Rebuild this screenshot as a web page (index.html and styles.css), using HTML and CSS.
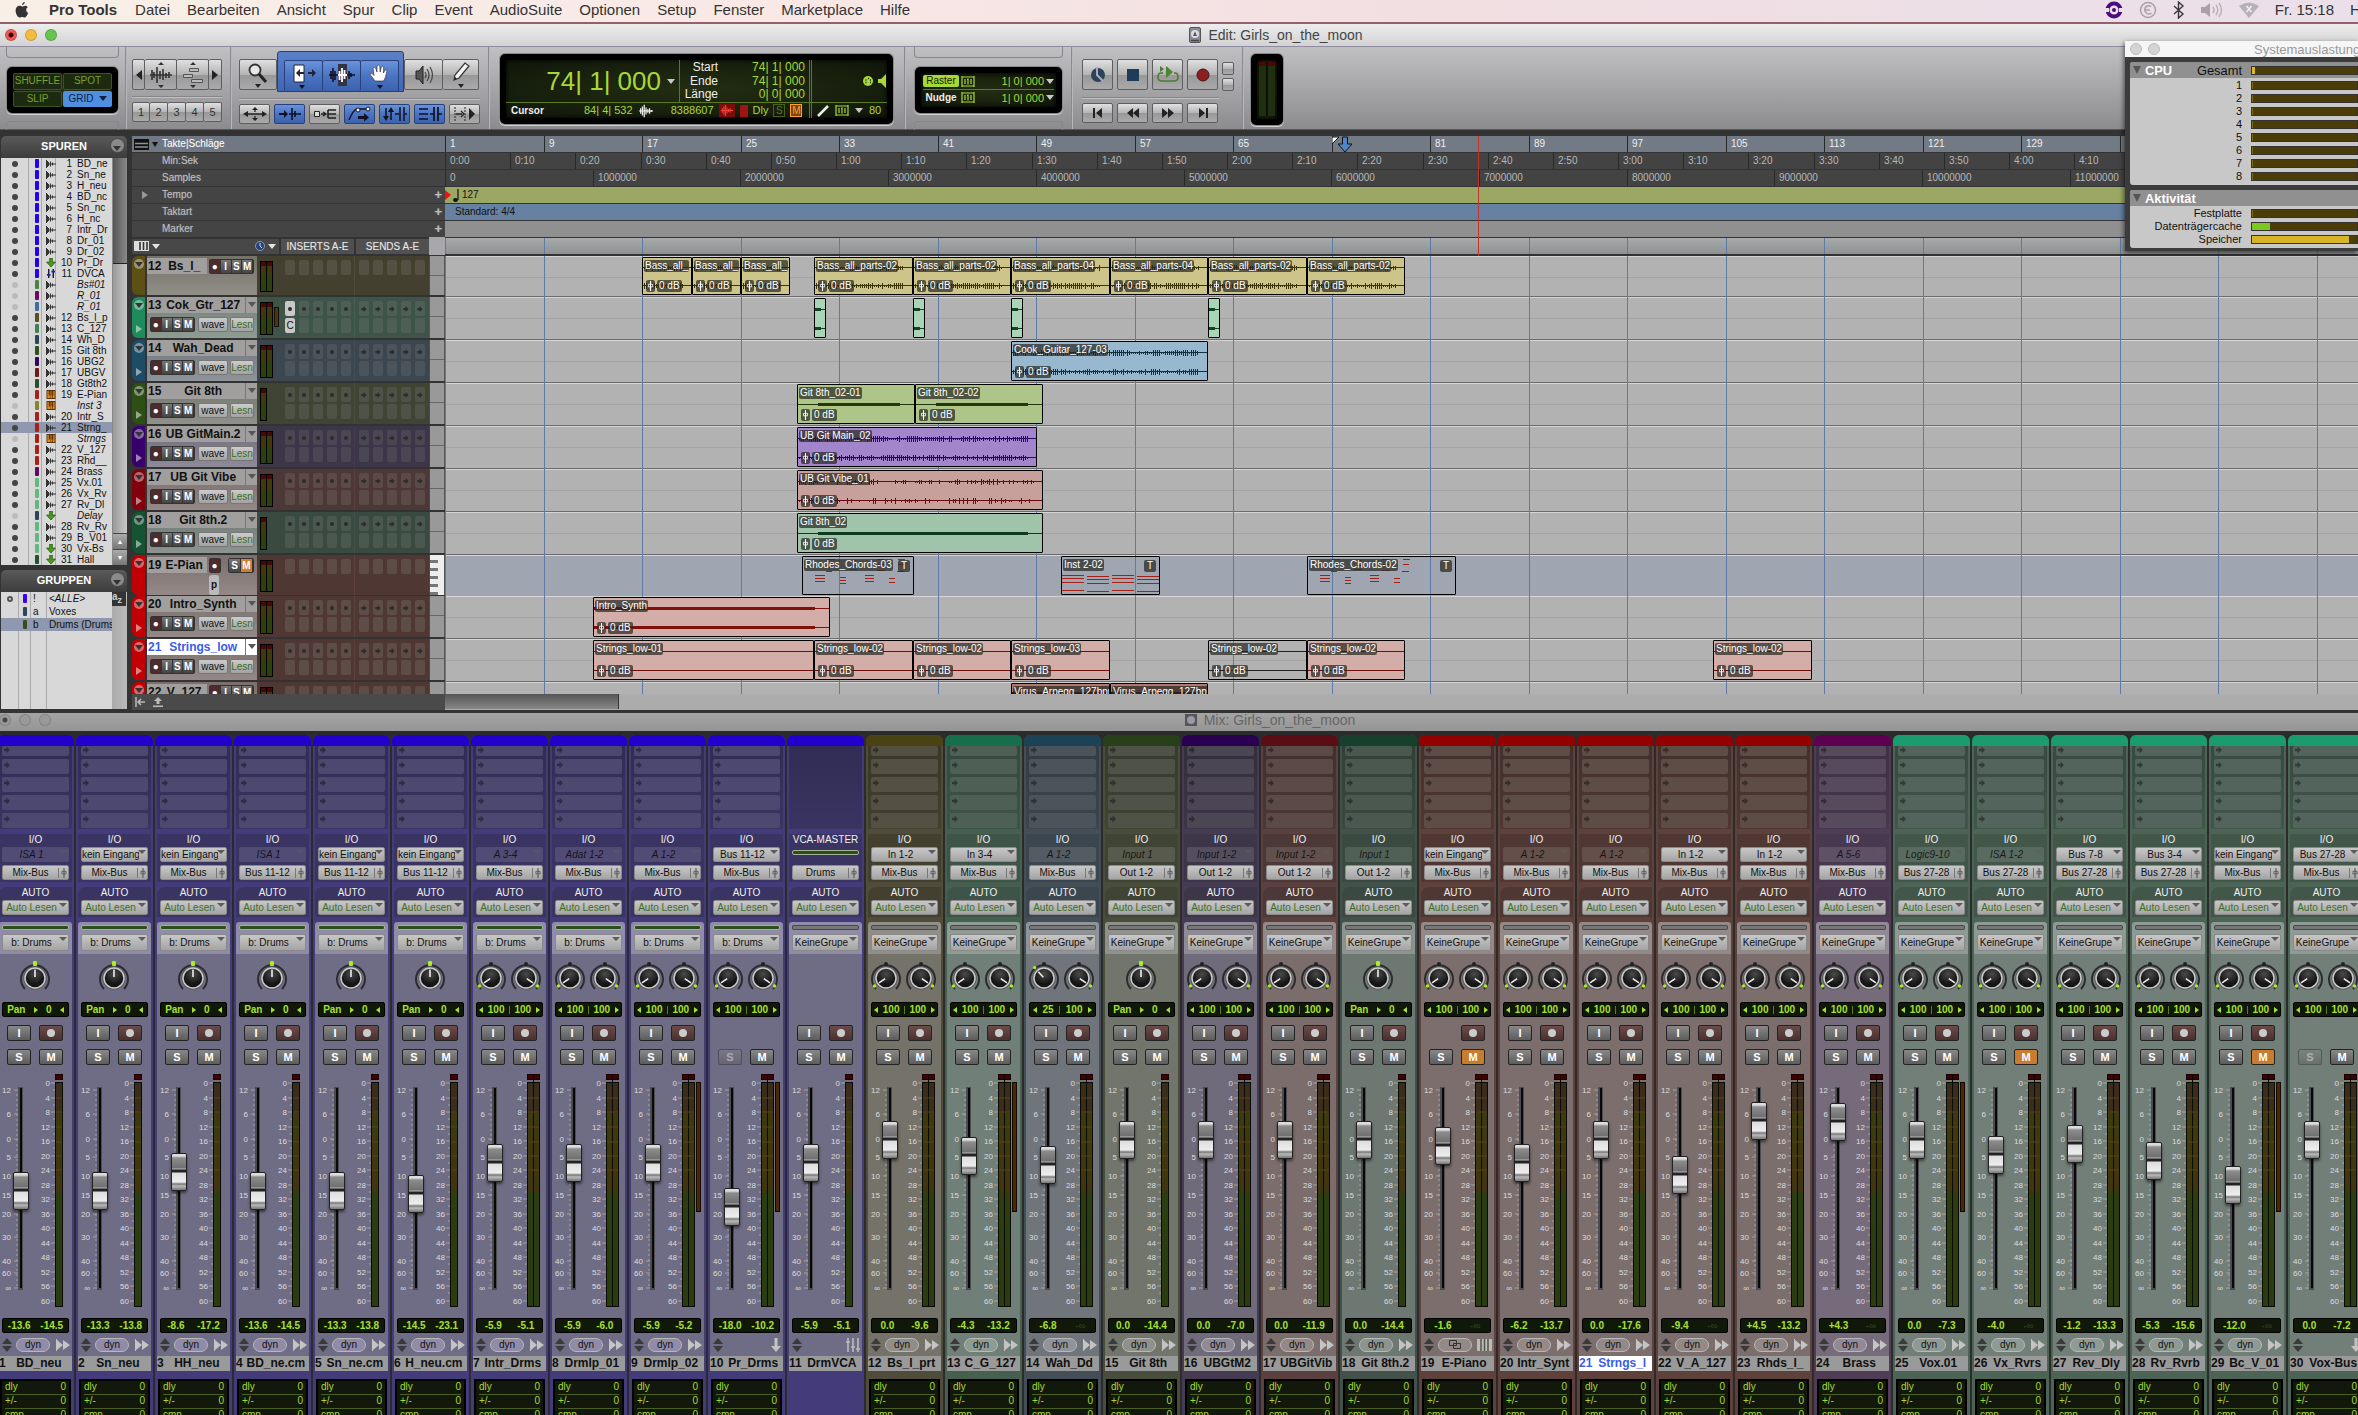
FILE: index.html
```html
<!DOCTYPE html>
<html lang="de">
<head>
<meta charset="utf-8">
<title>Pro Tools</title>
<link rel="stylesheet" href="styles.css">
</head>
<body>
<svg class="defs" aria-hidden="true">
  <defs>
    <linearGradient id="meterFill" x1="0" y1="0" x2="0" y2="1">
      <stop offset="0" stop-color="#3a2c1c"/><stop offset=".13" stop-color="#3a2f1a"/>
      <stop offset=".14" stop-color="#3d3a0e"/><stop offset=".48" stop-color="#40350f"/>
      <stop offset=".5" stop-color="#2c3d10"/><stop offset="1" stop-color="#2a3c10"/>
    </linearGradient>
    <radialGradient id="knobFill" cy=".3"><stop offset="0" stop-color="#4a4a4a"/><stop offset="1" stop-color="#151515"/></radialGradient>
    <symbol id="i-wave" viewBox="0 0 18 14"><path d="M1 7h16M3 4v6M5 2v10M7 0v14M9 3v8M11 5v4M13 4v6M15 6v2" stroke="currentColor" stroke-width="1.4" fill="none"/></symbol>
    <symbol id="i-trk" viewBox="0 0 10 8"><path d="M0 0h1v1h1v1h1v4h-1v1h-1v1h-1zM3 3.500h7v1H3zM4 1.500h1v5H4zM6 2.500h1v3H6z" fill="currentColor"/></symbol>
    <symbol id="i-aux" viewBox="0 0 10 10"><path d="M3.5 0h3v4.5H10L5 10 0 4.5h3.5z" fill="#4c9a1c" stroke="#27520c" stroke-width=".8"/></symbol>
    <symbol id="i-vca" viewBox="0 0 10 10"><path d="M2.500 0v10M7.500 0v10" stroke="#111" stroke-width="1.500"/><path d="M.5 5.500h4v2h-4zM5.500 2h4v2h-4z" fill="#1524a0"/></symbol>
    <symbol id="i-inst" viewBox="0 0 10 10"><path d="M0 0h10v10H0z" fill="#5b3408"/><path d="M1 1h1.500v5H4v3H1zM4.500 6V1h1v5H6v3H4.500zM7.500 1H9v8H6.800V6h.7z" fill="#e08a1e"/></symbol>
    <symbol id="i-fader" viewBox="0 0 8 12"><path d="M4 0v12" stroke="currentColor" stroke-width="1.300"/><path d="M1.500 4h5v3h-5z" fill="none" stroke="currentColor"/></symbol>
    <symbol id="i-grid" viewBox="0 0 14 11"><path d="M1 1h12M1 10h12M1 0v11M13 0v11M4 3v5M10 3v5M7 2.500v6M6 3.500h1" stroke="currentColor" stroke-width="1.200" fill="none"/></symbol>
    <symbol id="i-doc" viewBox="0 0 12 16"><rect x=".5" y=".5" width="11" height="15" rx="1.500" fill="#8a8a92" stroke="#555"/><circle cx="6" cy="7" r="4" fill="#dcdce4"/><path d="M6 4.500 8 9H4z" fill="#556"/><path d="M2 13.500h8" stroke="#444" stroke-width="1.500"/></symbol>
    <symbol id="i-ff" viewBox="0 0 14 12"><path d="M0 0h1v12H0zM1 1l6 5-6 5zM7 1l7 5-7 5z" fill="#c4c4c4"/></symbol>
    <symbol id="i-sort" viewBox="0 0 10 14"><path d="M5 0l5 6H0zM5 14l5-6H0z" fill="#3a3a3a"/></symbol>
    <symbol id="i-arrow" viewBox="0 0 7 8"><path d="M0 2.500h3V0l4 4-4 4V5.500H0z" fill="currentColor"/></symbol>
  </defs>
</svg>

<header class="menubar">
  <svg class="apple" viewBox="0 0 14 16"><path d="M9.800 0c.1 1.500-1.200 3-2.700 3C7 1.600 8.300.2 9.800 0zM12.800 5.200c-1 .6-1.600 1.500-1.600 2.700 0 1.300.8 2.400 2 2.900-.6 2-2 4.700-3.600 4.700-.9 0-1.300-.6-2.400-.6-1.200 0-1.600.6-2.500.6C2.800 15.500.6 11.900.6 8.500c0-3 1.900-4.700 3.800-4.700 1.200 0 2 .7 2.900.7.800 0 1.700-.8 3.100-.8 1 0 1.900.6 2.400 1.500z" fill="#333"/></svg>
  <nav class="menus">
    <a href="#" class="app">Pro Tools</a><a href="#">Datei</a><a href="#">Bearbeiten</a><a href="#">Ansicht</a><a href="#">Spur</a><a href="#">Clip</a><a href="#">Event</a><a href="#">AudioSuite</a><a href="#">Optionen</a><a href="#">Setup</a><a href="#">Fenster</a><a href="#">Marketplace</a><a href="#">Hilfe</a>
  </nav>
  <div class="status">
    <svg width="18" height="18" viewBox="0 0 18 18"><circle cx="9" cy="9" r="6.500" fill="none" stroke="#4a0d80" stroke-width="4"/><circle cx="9" cy="9" r="2" fill="#4a0d80"/><path d="M0 7h4v4H0zM14 7h4v4h-4z" fill="#eddfe8"/></svg>
    <svg width="18" height="18" viewBox="0 0 18 18"><circle cx="9" cy="9" r="7.500" fill="none" stroke="#a9a0a8" stroke-width="1.500"/><path d="M12 5.500c-4-2-7 1-6 4.500 1 3 4 4 6.500 2M6 9h5" fill="none" stroke="#a9a0a8" stroke-width="1.500"/></svg>
    <svg width="12" height="18" viewBox="0 0 12 18"><path d="M1 5l9 8-4.500 4V1L10 5l-9 8" fill="none" stroke="#3a363c" stroke-width="1.400"/></svg>
    <svg width="22" height="16" viewBox="0 0 22 16"><path d="M0 5h4l5-4v14l-5-4H0z" fill="#aaa0aa"/><path d="M12 5q2 3 0 6M15 3q3.500 5 0 10M18 1q5 7 0 14" fill="none" stroke="#b9aeb8" stroke-width="1.400"/></svg>
    <svg width="20" height="16" viewBox="0 0 20 16"><path d="M0 4Q10-3 20 4L10 16z" fill="#b9afb9"/><path d="M7.500 4l5 6M12.500 4l-5 6" stroke="#eee" stroke-width="1.600"/></svg>
    <span>Fr. 15:18</span><span class="user">H</span>
  </div>
</header>

<div class="titlebar">
  <div class="lights"><i class="red"></i><i class="yellow"></i><i class="green"></i></div>
  <h1 class="wtitle"><svg width="12" height="16"><use href="#i-doc"/></svg>Edit: Girls_on_the_moon</h1>
</div>

<section class="toolbar">
  <div class="tsec modes-sec">
    <div class="lcd modes"><button>SHUFFLE</button><button>SPOT</button><button>SLIP</button><button class="on">GRID<i class="tri"></i></button></div>
  </div>
  <div class="tsec zoom-sec">
    <div class="brow tall joined zoomrow">
      <button class="w13" aria-label="Zoom zurück"><svg width="6" height="10"><path d="M6 0v10L0 5z" fill="#222"/></svg></button>
      <button class="w32" aria-label="Audio-Zoom"><svg width="24" height="26" viewBox="0 0 24 26"><path d="M12 0l3 3H9zM12 26l3-3H9z" fill="#333"/><path d="M1 13h22M3 8v10M5 10v6M8 5v16M11 9v8M14 7v11M17 11v5M20 10v6" stroke="#333" stroke-width="1.600"/></svg></button>
      <button class="w32" aria-label="MIDI-Zoom"><svg width="22" height="26" viewBox="0 0 22 26"><path d="M11 0l3 3H8zM11 26l3-3H8z" fill="#333"/><path d="M7.500 6.500h9v3h-9zM1.500 12.500h9v3h-9zM9.500 17.500h11v3h-11z" fill="#bbb" stroke="#555"/></svg></button>
      <button class="w13" aria-label="Zoom vor"><svg width="6" height="10"><path d="M0 0v10l6-5z" fill="#222"/></svg></button>
    </div>
    <hr>
    <div class="brow short joined"><button class="w18">1</button><button class="w18">2</button><button class="w18">3</button><button class="w18">4</button><button class="w18">5</button></div>
  </div>
  <div class="tsec tools-sec">
    <div class="brow tall joined">
      <button class="w38" aria-label="Zoomer"><svg width="22" height="26" viewBox="0 0 22 26"><circle cx="8" cy="8" r="5.500" fill="#e8e8e8" stroke="#333" stroke-width="1.800"/><path d="M12 12l7 8" stroke="#222" stroke-width="3"/><path d="M8 22h6l-3 4z" fill="#222"/></svg></button>
      <span class="smart">
        <button class="blue" aria-label="Trimmer"><svg width="26" height="26" viewBox="0 0 26 26"><path d="M3 2h10v17H3z" fill="#fff" stroke="#223"/><path d="M5 10l4-4v3h4v2H9v3zM25 10l-4-4v3h-4v2h4v3z" fill="#223"/><path d="M8 22h6l-3 4z" fill="#112"/></svg></button>
        <button class="blue" aria-label="Auswahl"><svg width="26" height="26" viewBox="0 0 26 26"><path d="M9 1h9v22H9z" fill="#334"/><path d="M0 12h9M2 8v8M4 5v14M6 8v9M20 8v8M22 10v4M18 12h8" stroke="#112" stroke-width="1.600"/><path d="M9 12h9M10.500 8v9M13 5v14M15.500 7v9" stroke="#fff" stroke-width="1.800"/></svg></button>
        <button class="blue" aria-label="Greifer"><svg width="22" height="26" viewBox="0 0 22 26"><path d="M6 18C4 15 2 13 1 11c1-1.500 2.500-.5 4 1.500L4 5c1-1.500 2.500-.5 3 1l1 3V3c1-1.500 2.500-1 2.800.5L11.200 9l1-5c1-1.500 2.500-.8 2.500.8L14.500 10l1.500-3c1.200-.8 2.200 0 1.800 1.500-.8 3-1.300 7-3.300 9.500z" fill="#fff" stroke="#334" stroke-width=".7"/><path d="M8 22h6l-3 4z" fill="#112"/></svg></button>
      </span>
      <button class="w39" aria-label="Scrubber"><svg width="20" height="20" viewBox="0 0 20 20"><path d="M2 6h3l4-5v18l-4-5H2z" fill="#555" stroke="#222"/><path d="M11 7q2 3 0 6M13 4q4 6 0 12M16 2q5 8 0 16" fill="none" stroke="#444" stroke-width="1.200"/></svg></button>
      <button class="w35" aria-label="Stift"><svg width="18" height="26" viewBox="0 0 18 26"><path d="M2 18l1-5L13 1l4 3L7 16z" fill="#f4f4f4" stroke="#333" stroke-width="1.200"/><path d="M2 18l1-3 2 1.500z" fill="#222"/><path d="M6 22h6l-3 4z" fill="#222"/></svg></button>
    </div>
    <hr>
    <div class="brow short spaced">
      <button class="w31"><svg width="24" height="14" viewBox="0 0 24 14"><path d="M0 7l5-3v6zM24 7l-5-3v6zM12 0l3 3H9zM12 14l3-3H9z" fill="#222"/><path d="M4 7h16M12 3v2M12 9v2" stroke="#222" stroke-width="1.300"/></svg></button>
      <button class="w31 blue"><svg width="22" height="14" viewBox="0 0 22 14"><path d="M0 6h5V3l4 4-4 4V8H0z" fill="#112"/><path d="M10 7h12M13 1v12M16 4v6" stroke="#112" stroke-width="1.600"/></svg></button>
      <button class="w31"><svg width="22" height="12" viewBox="0 0 22 12"><path d="M.5 3.500h5v5h-5z" fill="#ddd" stroke="#222"/><path d="M7 6h4M9 4l3 2-3 2" stroke="#222" stroke-width="1.400" fill="none"/><path d="M14 2h8M14 6h8M14 10h8M14 2v8" stroke="#222" stroke-width="1.600"/></svg></button>
      <button class="w31 blue"><svg width="24" height="16" viewBox="0 0 24 16"><path d="M1 14C6 2 9 3 11 3h10" fill="none" stroke="#112" stroke-width="1.400"/><circle cx="10" cy="4" r="2" fill="#fff" stroke="#112"/><circle cx="20" cy="3" r="2" fill="#fff" stroke="#112"/><path d="M10 10h6V7l5 4.500-5 4V13h-6z" fill="#112"/></svg></button>
      <button class="w31 blue"><svg width="24" height="14" viewBox="0 0 24 14"><path d="M3 1v10M8 3v10M17 0v14M21 0v14M12 7h4M22 7h2" stroke="#112" stroke-width="1.500"/><path d="M0 9h6l-3 5zM5 5h6L8 0z" fill="#112"/></svg></button>
      <button class="w31 blue"><svg width="24" height="14" viewBox="0 0 24 14"><path d="M1 2h9M1 7h9M1 12h9M16 0v14M20 0v14M12 7h4M20 7h4" stroke="#112" stroke-width="1.700"/></svg></button>
      <button class="w31"><svg width="22" height="14" viewBox="0 0 22 14"><path d="M1 0v14M11 0v14" stroke="#222" stroke-dasharray="2 1"/><path d="M2 7h6M7 4l3 3-3 3" stroke="#222" fill="none" stroke-width="1.300"/><path d="M15 1l6 6-6 6z" fill="#222"/></svg></button>
    </div>
  </div>
  <div class="tsec counter-sec">
    <div class="lcd counter">
      <div class="main"><span class="big">74| 1| 000</span><i class="tri"></i></div>
      <dl class="range"><dt>Start</dt><dd>74| 1| 000</dd><dt>Ende</dt><dd>74| 1| 000</dd><dt>Länge</dt><dd>0| 0| 000</dd></dl>
      <div class="midi"><svg width="26" height="14" viewBox="0 0 26 14"><circle cx="6" cy="7" r="5" fill="#a8d838"/><path d="M3.500 6h1M6 4.500h1M8 6h1M3.500 8.500h1M8 8.500h1" stroke="#142000" stroke-width="1.400"/><path d="M16 5h3l5-5v14l-5-5h-3z" fill="#a8d838"/></svg></div>
      <div class="cursor"><b>Cursor</b><span class="c1">84| 4| 532</span><svg class="wv" width="16" height="14"><use href="#i-wave"/></svg><span class="c2">8388607</span><i class="redwave"><svg width="14" height="11"><use href="#i-wave"/></svg></i><i class="reddoc"></i><span>Dly</span><i class="sbox">S</i><i class="mbox">M</i></div>
      <div class="grid80"><svg width="12" height="12" viewBox="0 0 12 12"><path d="M1 11L11 1" stroke="#eee" stroke-width="2.500"/></svg><svg width="14" height="11"><use href="#i-grid"/></svg><i class="tri"></i><span>80</span></div>
    </div>
  </div>
  <div class="tsec raster-sec">
    <div class="lcd raster">
      <div><b class="badge">Raster</b><svg width="14" height="11"><use href="#i-grid"/></svg><span>1| 0| 000</span><i class="tri"></i></div>
      <div><b>Nudge</b><svg width="14" height="11"><use href="#i-grid"/></svg><span>1| 0| 000</span><i class="tri"></i></div>
    </div>
  </div>
  <div class="tsec transport-sec">
    <div class="brow tall trans">
      <button class="w31" aria-label="Online"><svg width="16" height="16" viewBox="0 0 16 16"><circle cx="8" cy="8" r="7" fill="#2c4258"/><path d="M7 0v8l6 6" stroke="#aab" stroke-width="2" fill="none"/></svg></button>
      <button class="w31" aria-label="Stopp"><svg width="12" height="12"><rect width="12" height="12" fill="#1e3c58"/></svg></button>
      <button class="w31" aria-label="Wiedergabe"><svg width="24" height="20" viewBox="0 0 24 20"><path d="M10 1l7 6-7 6z" fill="#4c8430"/><path d="M7 8H5q-3 0-3 4t4 4h12q4 0 4-4t-3-4h-1" fill="none" stroke="#4c7a38" stroke-width="1.600"/><path d="M4 1l4 3-4 3z" fill="#4c7a38"/></svg></button>
      <button class="w31" aria-label="Aufnahme"><svg width="14" height="14"><circle cx="7" cy="7" r="6" fill="#8a2020" stroke="#4a1010"/></svg></button>
      <span class="mini"><button></button><button></button></span>
    </div>
    <hr>
    <div class="brow short trans">
      <button class="w31" aria-label="Anfang"><svg width="10" height="10"><path d="M0 0h2v10H0zM9 0v10L3 5z" fill="#222"/></svg></button>
      <button class="w31" aria-label="Zurück"><svg width="12" height="10"><path d="M6 0v10L0 5zM12 0v10L6 5z" fill="#222"/></svg></button>
      <button class="w31" aria-label="Vor"><svg width="12" height="10"><path d="M0 0v10l6-5zM6 0v10l6-5z" fill="#222"/></svg></button>
      <button class="w31" aria-label="Ende"><svg width="10" height="10"><path d="M8 0h2v10H8zM1 0v10l6-5z" fill="#222"/></svg></button>
    </div>
  </div>
  <div class="tsec last-sec"><div class="lcd vu"><i></i></div></div>
</section>

<main class="edit">
  <aside class="side">
    <h2>SPUREN<button aria-label="Spurenmenü"><i class="tri"></i></button></h2>
    <div class="listwrap"><ul class="tracklist" id="tracklist"></ul><div class="vscroll"><i class="thumb"></i><button>▲</button><button>▼</button></div></div>
    <h2>GRUPPEN<button aria-label="Gruppenmenü"><i class="tri"></i></button></h2>
    <div class="listwrap groups"><ul class="grouplist">
      <li><i class="ring"></i><i class="bar g0"></i><span>!</span><em>&lt;ALLE&gt;</em></li>
      <li><i></i><i class="bar g1"></i><span>a</span>Voxes</li>
      <li class="on"><i></i><i class="bar g2"></i><span>b</span>Drums (Drums</li>
    </ul><div class="az"><b>a<sub>z</sub></b></div></div>
  </aside>
  <section class="arrange">
    <div class="rulers" id="rulers">
      <div class="rh first"><svg width="15" height="11" viewBox="0 0 15 11"><path d="M0 0h15v11H0z" fill="#111"/><path d="M1 4.500h13M1 8h13" stroke="#8b929c" stroke-width="1.500"/></svg><i class="tri"></i><span>Takte|Schläge</span></div><div class="rl bars"></div>
      <div class="rh"><span>Min:Sek</span></div><div class="rl mins"></div>
      <div class="rh"><span>Samples</span></div><div class="rl samp"></div>
      <div class="rh"><i class="rtri"></i><span>Tempo</span><b>+</b></div><div class="rl tempo"><i class="redmark"></i><svg width="6" height="13" viewBox="0 0 6 13"><ellipse cx="2.500" cy="11" rx="2.500" ry="2" fill="#111"/><path d="M5 0v11" stroke="#111" stroke-width="1.200"/></svg>127</div>
      <div class="rh"><span>Taktart</span><b>+</b></div><div class="rl meter">Standard: 4/4</div>
      <div class="rh"><span>Marker</span><b>+</b></div><div class="rl marker"></div>
      <div class="rh cols"><div class="c0"><svg width="15" height="10" viewBox="0 0 15 10"><path d="M0 0h15v10H0z" fill="#ddd"/><path d="M6 1v8M9.500 1v8M13 1v8" stroke="#333" stroke-width="1.600"/></svg><i class="tri"></i><svg class="clock" width="10" height="10" viewBox="0 0 10 10"><circle cx="5" cy="5" r="4.500" fill="#26427c" stroke="#89a"/><path d="M5 2v3l2 2" stroke="#cde" fill="none"/></svg><i class="tri"></i></div><div class="c1">INSERTS A-E</div><div class="c1">SENDS A-E</div><div class="c2"></div></div><div class="rl strip"></div>
      <i class="playhead"></i>
      <svg class="insertion" width="22" height="17" viewBox="0 0 22 17"><path d="M0 1h7L0 8z" fill="#fff" stroke="#111"/><path d="M10.500 1h5v7H20l-7 8-7-8h4.500z" fill="#4f86c6" stroke="#111"/></svg>
    </div>
    <div class="tracks" id="tracks"></div>
    <div class="foot"><div class="fl"><svg width="10" height="10" viewBox="0 0 10 10"><path d="M1 0v10M10 5H4M6 2L3 5l3 3" stroke="#bbb" stroke-width="1.500" fill="none"/></svg><svg width="10" height="10" viewBox="0 0 10 10"><path d="M5 0l4 4H6.500v3h-3V4H1zM0 8.500h10V10H0z" fill="#bbb"/></svg></div><div class="hs"><i></i></div></div>
  </section>
</main>

<aside class="sys">
  <div class="systitle"><i></i><i></i><span>Systemauslastung</span></div>
  <div class="card cpu"><h3><i class="tri"></i>CPU<span>Gesamt</span><i class="load total"></i></h3><div id="cpus"></div></div>
  <div class="card"><h3><i class="tri"></i>Aktivität</h3>
    <div class="srow"><span>Festplatte</span><i class="load"></i></div>
    <div class="srow"><span>Datenträgercache</span><i class="load gr"></i></div>
    <div class="srow"><span>Speicher</span><i class="load ye"></i></div></div>
</aside>

<div class="titlebar mixtitle">
  <div class="lights"><i class="dot"></i><i></i><i></i></div>
  <h1 class="wtitle"><svg width="12" height="12" viewBox="0 0 12 12"><path d="M0 0h12v12H0z" fill="#555"/><circle cx="6" cy="6" r="4" fill="#99a"/></svg>Mix: Girls_on_the_moon</h1>
</div>
<section class="mixer" id="mixer"></section>
<script src="app.js"></script>
</body>
</html>
```
FILE: app.js
```js
const PX_PER_BAR8 = 98.5;
const esc = s => s.replace(/</g, '&lt;');
const use = (id, w, h, c = '') => `<svg class="${c}" width="${w}" height="${h}"><use href="#${id}"/></svg>`;

/* ---- rulers ---- */
const mark = (x, t) => `<span class="mk" style="left:${Math.round(x)}px">${t}</span>`;
let h = '';
for (let i = 0; i <= 17; i++) h += mark(i * PX_PER_BAR8, i === 9 || i === 17 ? '' : 1 + i * 8);
document.querySelector('.bars').innerHTML = h;
h = '';
for (let i = 0; i <= 25; i++) h += mark(i * 65.17, `${Math.floor(i / 6)}:${i % 6}0`);
document.querySelector('.mins').innerHTML = h;
h = '';
for (let i = 0; i <= 11; i++) h += mark(i * 147.7, i ? i + '000000' : '0');
document.querySelector('.samp').innerHTML = h;
const grid = () => {
  let g = '';
  for (let i = 0; i <= 19; i++) g += `<i class="gl" style="left:${Math.round(i * PX_PER_BAR8)}px"></i>`;
  return g;
};
document.querySelector('.strip').innerHTML = grid();

/* ---- track list ---- */
const B = '#2300ee', R = '#a52218', V = '#63b882';
const list = [
  ['1', 'BD_ne', B], ['2', 'Sn_ne', B], ['3', 'H_neu', B], ['4', 'BD_nc', B], ['5', 'Sn_nc', B], ['6', 'H_nc', B],
  ['7', 'Intr_Dr', B], ['8', 'Dr_01', B], ['9', 'Dr_02', B], ['10', 'Pr_Dr', B, 'aux'], ['11', 'DVCA', B, 'vca'],
  ['', 'Bs#01', '#4a8440'], ['', 'R_01', '#6a0a66'], ['', 'R_01', '#3f6ea5'], ['12', 'Bs_l_p', '#5a501c'],
  ['13', 'C_127', '#43805a'], ['14', 'Wh_D', '#2b465e'], ['15', 'Git 8th', '#344f1c'], ['16', 'UBG2', '#33085c'],
  ['17', 'UBGV', '#6e1a16'], ['18', 'Gt8th2', '#28502f'], ['19', 'E-Pian', R, 'inst'], ['', 'Inst 3', '#8a842c', 'inst'],
  ['20', 'Intr_S', R], ['21', 'Strng_', R, '', 1], ['', 'Strngs', R, 'inst'], ['22', 'V_127', R], ['23', 'Rhd__', R],
  ['24', 'Brass', '#620a5e'], ['25', 'Vx.01', V], ['26', 'Vx_Rv', V], ['27', 'Rv_Dl', V], ['', 'Delay', '#2b465e', 'aux'],
  ['28', 'Rv_Rv', V], ['29', 'B_V01', V], ['30', 'Vx-Bs', V, 'aux'], ['31', 'Hall', '#285034', 'aux']];
document.getElementById('tracklist').innerHTML = list.map(([n, t, c, k, on]) =>
  `<li class="${on ? 'on ' : ''}${n ? '' : 'off'}"><i class="dot"></i><i class="bar" style="background:${c}"></i>` +
  `${use('i-' + (k || 'trk'), k ? 9 : 10, k ? 9 : 8, 'ic')}<span>${n}</span><em>${t}</em></li>`).join('');

document.getElementById('cpus').innerHTML =
  [1, 2, 3, 4, 5, 6, 7, 8].map(n => `<div class="srow"><span>${n}</span><i class="load"></i></div>`).join('');

/* ---- clips ---- */
let seed = 7;
const rnd = () => (seed = (seed * 16807) % 2147483647) / 2147483647;
function wave(w, hgt, kind, col) {
  const ys = kind === 'mono' ? [hgt / 2] : [hgt * .26, hgt * .75];
  let p = '';
  for (const y0 of ys) {
    const y = Math.round(y0);
    p += `M0 ${y}h${w}v1h-${w}z`;
    if (kind === 'noise' || kind === 'sparse')
      for (let x = 1; x < w - 10; x += 2) {
        if (kind === 'sparse' && rnd() < .5) continue;
        const a = Math.ceil(rnd() * 3);
        p += `M${x} ${y - a + 1}h1v${a * 2}h-1z`;
      }
    if (kind === 'mono') p += `M20 ${y - 1}h${w - 36}v3h-${w - 36}z`;
    if (kind === 'solid') { const l = Math.max(w - 16, 6); p += `M0 ${y - 1}h${l}v3h-${l}z`; }
    if (kind === 'heavy') p += `M0 ${y - 1}h${w}v4h-${w}z`;
  }
  return `<svg class="wf" width="${w}" height="${hgt}"><path d="${p}" fill="${col}"/></svg>`;
}
function midi(w, dense) {
  let p = '';
  if (dense) for (let k = 0; k < 4; k++) for (const y of [18, 21, 25, 33]) p += `M${k * 25} ${y + (k % 2)}h22v1h-22z`;
  else for (const [x, y, l] of [[24, 2, 8], [25, 6, 6], [24, 10, 7], [23, 14, 6], [46, 3, 7], [47, 8, 6], [46, 12, 8], [74, 2, 7], [75, 7, 6], [74, 13, 8], [95, 2, 7], [95, 7, 6], [94, 14, 7],
    [12, 18, 10], [12, 21, 10], [12, 24, 10], [37, 20, 6], [37, 23, 6], [37, 26, 6], [62, 18, 9], [62, 21, 9], [62, 24, 9], [86, 21, 6], [86, 25, 6]])
    p += `M${x} ${y}h${l}v1h-${l}z`;
  return `<svg class="wf" width="${w}" height="37"><path d="${p}" fill="#a32015"/></svg>`;
}
function clip([x, x2, name, kind], bg, col, hgt) {
  const w = x2 - x;
  if (kind === 'grey') { bg = 'transparent'; col = '#222'; kind = 'line'; }
  const isMidi = kind === 'midi' || kind === 'dense';
  return `<div class="clip" style="left:${x - 445}px;width:${w}px;background:${bg}">` +
    (isMidi ? midi(w, kind === 'dense') : wave(w, hgt, kind, col)) +
    (name ? `<span class="cn">${name}</span>` : '') +
    (isMidi ? '<span class="tt">T</span>' : name ? `<span class="db">${use('i-fader', 7, 10)}</span><span class="db2">0 dB</span>` : '') + '</div>';
}
const T = [
  { n: 12, t: 'Bs_l_', k: 'short', v: 'olive', c: '#cdc48a', w: '#3b3408', clips: [[642, 692, 'Bass_all_', 'noise'], [692, 741, 'Bass_all_', 'noise'], [741, 790, 'Bass_all_', 'noise'], [814, 913, 'Bass_all_parts-02', 'noise'], [913, 1011, 'Bass_all_parts-02', 'noise'], [1011, 1110, 'Bass_all_parts-04', 'noise'], [1110, 1208, 'Bass_all_parts-04', 'noise'], [1208, 1307, 'Bass_all_parts-02', 'noise'], [1307, 1405, 'Bass_all_parts-02', 'noise']] },
  { n: 13, t: 'Cok_Gtr_127', v: 'green', x: 1, c: '#a9d4b6', w: '#0f4428', clips: [[814, 826, '', 'solid'], [913, 925, '', 'solid'], [1011, 1023, '', 'solid'], [1208, 1220, '', 'solid']] },
  { n: 14, t: 'Wah_Dead', v: 'blue', c: '#98b8d0', w: '#15303f', clips: [[1011, 1208, 'Cook_Guitar_127-03', 'noise']] },
  { n: 15, t: 'Git 8th', v: 'moss', mono: 1, c: '#adc588', w: '#24380c', clips: [[797, 915, 'Git 8th_02-01', 'mono'], [915, 1043, 'Git 8th_02-02', 'mono']] },
  { n: 16, t: 'UB GitMain.2', v: 'violet', c: '#a385cc', w: '#2a0668', clips: [[797, 1037, 'UB Git Main_02', 'noise']] },
  { n: 17, t: 'UB Git Vibe', v: 'wine', c: '#c79f9b', w: '#6a0a10', clips: [[797, 1043, 'UB Git Vibe_01', 'sparse']] },
  { n: 18, t: 'Git 8th.2', v: 'pine', mono: 1, c: '#a0c4aa', w: '#0e3a20', clips: [[797, 1043, 'Git 8th_02', 'mono']] },
  { n: 19, t: 'E-Pian', k: 'short inst', v: 'red', c: 'transparent', clips: [[802, 914, 'Rhodes_Chords-03', 'midi'], [1061, 1160, 'Inst 2-02', 'dense'], [1307, 1456, 'Rhodes_Chords-02', 'midi']] },
  { n: 20, t: 'Intro_Synth', v: 'red', c: '#d3ada7', w: '#80100c', clips: [[593, 830, 'Intro_Synth', 'solid']] },
  { n: 21, t: 'Strings_low', v: 'red', k: 'picked', c: '#d3ada7', w: '#70100c', clips: [[593, 814, 'Strings_low-01', 'line'], [814, 913, 'Strings_low-02', 'line'], [913, 1011, 'Strings_low-02', 'line'], [1011, 1110, 'Strings_low-03', 'line'], [1208, 1307, 'Strings_low-02', 'grey'], [1307, 1405, 'Strings_low-02', 'line'], [1713, 1812, 'Strings_low-02', 'line']] },
  { n: 22, t: 'V_127', k: 'short', v: 'red', c: '#b07870', w: '#4a0806', clips: [[1011, 1110, 'Virus_Arpegg_127bpm', 'heavy'], [1110, 1208, 'Virus_Arpegg_127bpm', 'heavy']] }];
const five = f => [0, 1, 2, 3, 4].map(f).join('');
document.getElementById('tracks').innerHTML = `<div class="gridlayer">${grid()}</div>` + T.map(t => {
  const k = t.k || '', short = k.includes('short'), inst = k.includes('inst');
  const ism = inst ? '<div class="ism one"><button class="rec">●</button></div><div class="ism sm"><button>S</button><button class="mute">M</button></div>'
    : '<div class="ism"><button class="rec">●</button><button>I</button><button>S</button><button>M</button></div>';
  const cells = c => `<div class="cells">${five(i => `<i class="${t.x && c === 'dot' && i === 0 ? 'lit' : ''}">${short ? '' : c === 'dot' ? '<b></b>' : use('i-arrow', 6, 6)}</i>`)}` +
    (short ? '' : five(i => `<i class="${t.x && c === 'dot' && i === 0 ? 'lit' : ''}">${t.x && c === 'dot' && i === 0 ? 'C' : ''}</i>`)) + '</div>';
  return `<div class="track v-${t.v} ${k}"><div class="strip2"><i class="rnd"><i class="tri"></i></i>${short ? '' : '<i class="rtri"></i>'}</div>` +
    `<div class="tp"><div class="tn"><span>${t.n}</span><strong>${t.t}</strong>${short ? '' : '<i class="ar"><i class="tri"></i></i>'}</div>` +
    (short ? ism : `<div class="tb">${ism}<button class="pill">wave</button><button class="pill auto">Lesn</button></div>`) +
    (inst ? '<button class="pb">p</button>' : '') + '</div>' +
    `<div class="vm ${t.mono ? 'mono' : ''}"><i></i>${t.mono ? '' : '<i></i>'}${t.x ? '<u></u>' : ''}</div>` +
    cells('dot') + cells('arr') + `<div class="pv ${inst ? 'keys' : ''}"></div>` +
    `<div class="lane">${t.clips.map(c => clip(c, t.c, t.w, short ? 36 : 38)).join('')}</div></div>`;
}).join('');

/* ---- mixer ----  name, input, output, pan, fader top, level, peak, opts */
const K = 'kein Eingang', MB = 'Mix-Bus', b11 = 'Bus 11-12', b27 = 'Bus 27-28', o12 = 'Out 1-2';
const C = [
  ['BD_neu', '*ISA 1', MB, 0, 1172, '-13.6', '-14.5'], ['Sn_neu', K, MB, 0, 1172, '-13.3', '-13.8'],
  ['HH_neu', K, MB, 0, 1153, '-8.6', '-17.2'], ['BD_ne.cm', '*ISA 1', b11, 0, 1172, '-13.6', '-14.5'],
  ['Sn_ne.cm', K, b11, 0, 1172, '-13.3', '-13.8'], ['H_neu.cm', K, b11, 0, 1175, '-14.5', '-23.1'],
  ['Intr_Drms', '*A 3-4', MB, 100, 1144, '-5.9', '-5.1'], ['Drmlp_01', '*Adat 1-2', MB, 100, 1144, '-5.9', '-6.0'],
  ['Drmlp_02', '*A 1-2', MB, 100, 1144, '-5.9', '-5.2', 'xm'], ['Pr_Drms', b11, MB, 100, 1188, '-18.0', '-10.2', 'xm aux'],
  ['DrmVCA', '', 'Drums', -1, 1144, '-5.9', '-5.1', 'vca'], ['Bs_l_prt', 'In 1-2', MB, 100, 1121, '0.0', '-9.6'],
  ['C_G_127', 'In 3-4', MB, 100, 1137, '-4.3', '-13.2', 'xm'], ['Wah_Dd', '*A 1-2', MB, 25, 1146, '-6.8', ''],
  ['Git 8th', '*Input 1', o12, 0, 1121, '0.0', '-14.4'], ['UBGtM2', '*Input 1-2', o12, 100, 1121, '0.0', '-7.0'],
  ['UBGitVib', '*Input 1-2', o12, 100, 1121, '0.0', '-11.9'], ['Git 8th.2', '*Input 1', o12, 0, 1121, '0.0', '-14.4'],
  ['E-Piano', K, MB, 100, 1127, '-1.6', '', 'muted inst'], ['Intr_Synt', '*A 1-2', MB, 100, 1144, '-6.2', '-13.7'],
  ['Strngs_l', '*A 1-2', MB, 100, 1121, '0.0', '-17.6', 'picked'], ['V_A_127', 'In 1-2', MB, 100, 1156, '-9.4', ''],
  ['Rhds_l_', 'In 1-2', MB, 100, 1102, '+4.5', '-13.2'], ['Brass', '*A 5-6', MB, 100, 1103, '+4.3', ''],
  ['Vox.01', '*Logic9-10', b27, 100, 1121, '0.0', '-7.3', 'xm'], ['Vx_Rvrs', '*ISA 1-2', b27, 100, 1136, '-4.0', '', 'muted'],
  ['Rev_Dly', 'Bus 7-8', b27, 100, 1125, '-1.2', '-13.3'], ['Rv_Rvrb', 'Bus 3-4', b27, 100, 1142, '-5.3', '-15.6'],
  ['Bc_V_01', K, MB, 100, 1166, '-12.0', '', 'muted xm'], ['Vox-Bus', b27, MB, 100, 1121, '0.0', '-7.2', 'aux']];
const skin = n => n <= 11 ? 'drum' : { 12: 'olive', 13: 'green', 14: 'blue', 15: 'moss', 16: 'violet', 17: 'wine', 18: 'pine', 24: 'plum' }[n] || (n <= 23 ? 'red' : 'mint');
const LEFT = [['12', 22], ['6', 46], ['0', 71], ['5', 89], ['10', 108], ['15', 127], ['20', 146], ['30', 169], ['40', 193], ['60', 205], ['∞', 220]];
function bay(mono, extra) {
  const mw = mono ? 8 : 13, mx = extra ? 51 : mono ? 56 : 54, lx = mx - 5;
  let s = '<svg class="bay" width="73" height="240">';
  let p = '';
  for (const [t, y] of LEFT) { s += `<text x="12" y="${y + 3}">${t}</text>`; p += `M15 ${y}h4`; }
  for (let y = 27; y < 220; y += 5) p += `M17 ${y}h2`;
  for (let i = 0; i <= 15; i++) {
    const y = Math.round(15 + i * 14.53);
    s += `<text x="${lx}" y="${y + 3}">${i * 4}</text>`; p += `M${lx + 1} ${y}h4`;
    if (i < 15) p += `M${lx + 3} ${y + 7}h2`;
  }
  s += `<path d="${p}" stroke="#bbb" opacity=".7"/><rect x="19" y="19" width="5" height="203" fill="#4c4c50"/><rect x="21" y="20" width="2" height="200" fill="#080808"/>`;
  s += `<rect x="${mx}" y="6" width="${mw}" height="6" fill="#1c0000"/><rect x="${mx + 1}" y="7" width="${mw - 2}" height="4" fill="#3c0204"/>`;
  s += `<rect x="${mx}" y="14" width="${mw}" height="225" fill="#0a0a05"/><rect x="${mx + 1}" y="15" width="${mw - 2}" height="223" fill="url(#meterFill)"/>`;
  if (!mono) s += `<path d="M${mx + 6} 7h1v231h-1z" fill="#0a0a05"/>`;
  s += `<path d="${[30, 44, 59, 74, 88, 102].map(y => `M${mx + 1} ${y}h${mw - 2}`).join('')}" stroke="#5c4412"/>`;
  if (extra) s += `<rect x="${mx + 14}" y="14" width="5" height="130" fill="#120800"/><rect x="${mx + 15}" y="15" width="3" height="128" fill="#4a2804"/>`;
  return s + '</svg>';
}
function knob(a, mid) {
  const r = a * Math.PI / 180, px = (d) => (Math.sin(r) * d).toFixed(1), py = d => (-Math.cos(r) * d).toFixed(1);
  return `<svg class="knob" width="32" height="34" viewBox="-16 -17 32 34"><path d="M-10 11A14 14 0 1 1 10 11" fill="none" stroke="#2c2c30" stroke-width="2"/>` +
    `<circle r="11.500" fill="#555"/><circle r="10" fill="url(#knobFill)" stroke="#ccc" stroke-width="1.500"/>` +
    `<path d="M${px(1)} ${py(1)}L${px(8.5)} ${py(8.5)}" stroke="#eee" stroke-width="1.600"/>` +
    (mid ? '<rect x="-2" y="-17" width="4" height="5" rx="1" fill="#a6f01c"/>' : `<circle cy="-14" r="2" fill="#222"/><circle cx="${px(14)}" cy="${py(14)}" r="1.700" fill="#a6f01c"/>`) + '</svg>';
}
const sel = (v, cls, label) => `<span class="dd ${cls}"><select aria-label="${label}"><option>${v}</option></select></span>`;
document.getElementById('mixer').innerHTML = C.map(([name, inp, out, pan, top, lv, pk, o = ''], i) => {
  const n = i + 1, vca = o.includes('vca'), aux = o.includes('aux'), inst = o.includes('inst');
  const mono = pan === 0 || vca, grp = n <= 10;
  const pans = vca ? '' : mono ? knob(0, 1) : knob(pan === 25 ? -42 : -125) + knob(125);
  const pand = vca ? '' : mono ? '<span>Pan</span><i class="pr"></i><span>0</span><i class="pl"></i>' : `<i class="pl"></i><span>${pan}</span><u></u><span>100</span><i class="pr"></i>`;
  const icon = aux ? '<svg class="ri" width="10" height="14" viewBox="0 0 10 14"><path d="M3.500 0h3v8H10l-5 6-5-6h3.500z" fill="#c4c4c4"/></svg>'
    : vca ? '<svg class="ri" width="14" height="14" viewBox="0 0 14 14"><path d="M2 0v14M7 0v14M12 0v14M0 4h4M5 9h4M10 11h4" stroke="#bbb" stroke-width="1.600"/></svg>'
    : inst ? '<svg class="ri" width="15" height="12" viewBox="0 0 15 12"><path d="M0 0h15v12H0z" fill="#bbb"/><path d="M4 0v12M7.500 0v12M11 0v12" stroke="#554" stroke-width="1.500"/></svg>' : use('i-ff', 14, 12, 'ri');
  return `<article class="ch v-${skin(n)} ${o}"><div class="cap"></div>` +
    `<div class="sends">${vca ? '' : five(() => `<i>${use('i-arrow', 6, 8)}</i>`)}</div>` +
    `<div class="pan1"><h4>${vca ? 'VCA-MASTER' : 'I/O'}</h4>${vca ? '<div class="gbar drumg"></div>' : sel(inp.replace('*', ''), inp[0] === '*' ? 'ina' : '', 'Eingang')}<button class="out"><span>${out}</span>${use('i-fader', 8, 10)}</button></div>` +
    `<div class="pan1 auto"><h4>AUTO</h4>${sel('Auto Lesen', 'gt', 'Automation')}</div>` +
    `<div class="grp"><div class="gbar ${grp ? 'drumg' : ''}"></div>${sel(grp ? 'b: Drums' : 'KeineGrupe', '', 'Gruppe')}</div>` +
    `<div class="low"><div class="knobs">${pans}</div><div class="disp pand ${vca ? 'none' : ''}">${pand}</div>` +
    `<div class="bt">${aux ? '' : `${inst ? '<span></span>' : '<button>I</button>'}<button class="rec" aria-label="Aufnahme"><i></i></button>`}</div>` +
    `<div class="bt"><button ${aux ? 'disabled' : ''}>S</button><button class="${o.includes('muted') ? 'mute' : ''}">M</button></div>` +
    `<div class="fader">${bay(mono, o.includes('xm'))}<input type="range" aria-label="Pegel ${name}" min="0" max="202" value="${1270 - top}"></div>` +
    `<div class="disp lev"><span>${lv}</span><span class="${pk ? '' : 'inf'}">${pk || '-∞'}</span></div>` +
    `<div class="dyn">${use('i-sort', 10, 14)}${aux || vca ? '' : `<button>${inst ? '<svg width="12" height="9"><path d="M.5.500h7v5h-7zM4.500 3.500h7v5h-7z" fill="none" stroke="#333"/></svg>' : 'dyn'}</button>`}${icon}</div>` +
    `<div class="nm"><span>${n}</span><strong>${esc(name)}</strong></div></div>` +
    (vca ? '' : '<dl class="dly"><div><dt>dly</dt><dd>0</dd></div><div><dt>+/-</dt><dd>0</dd></div><div><dt>cmp</dt><dd>0</dd></div></dl>') + '</article>';
}).join('');
```
FILE: styles.css
```css
* { box-sizing: border-box; }
body { margin: 0; height: 100vh; overflow: hidden; display: flex; flex-direction: column; background: #2b2b2b; font: 10px/12px "Liberation Sans", Arial, sans-serif; color: #111; position: relative; }
button, select, input { font: inherit; margin: 0; padding: 0; border: 0; color: inherit; }
h1, h2, h3, h4, dl, dd, ul { margin: 0; padding: 0; list-style: none; font-weight: normal; }
i, em { display: block; }
svg { display: block; flex: none; }
a { color: inherit; text-decoration: none; }
.defs { position: absolute; width: 0; height: 0; }
.tri { border: 4px solid transparent; border-top: 5px solid currentColor; border-bottom: 0; flex: none; width: 0; }

/* menu bar and window title */
.menubar { height: 24px; flex: none; display: flex; align-items: center; padding: 0 0 2px 15px; background: linear-gradient(90deg, #f7f0e6, #f9e9e6 30%, #f2dfe2 60%, #eadfea); border-bottom: 2px solid #94606c; font-size: 15px; line-height: 20px; color: #333; }
.apple { width: 14px; height: 16px; }
.menus { display: flex; gap: 17px; padding-left: 20px; flex: 1; }
.menus .app { font-weight: bold; margin-right: 1px; }
.status { display: flex; align-items: center; gap: 16px; white-space: nowrap; overflow: hidden; }
.status .user { width: 8px; overflow: hidden; }
.titlebar { height: 23px; flex: none; display: flex; align-items: center; background: linear-gradient(#ededed, #d2d2d2); border-bottom: 1px solid #8f8ba0; position: relative; }
.lights { display: flex; gap: 8px; padding-left: 5px; width: 194px; }
.lights i { width: 12px; height: 12px; border-radius: 50%; border: 1px solid rgba(0,0,0,.15); }
.red { background: radial-gradient(#400 2px, #ee5b54 3px); }
.yellow { background: #f3bc40; }
.green { background: #68c452; }
.wtitle { flex: 1; display: flex; justify-content: center; align-items: center; gap: 7px; font-size: 14px; color: #444; line-height: 16px; }

/* toolbar */
.toolbar { height: 83px; flex: none; display: flex; background: linear-gradient(#c0c0c2, #8c8c8e); border-bottom: 1px solid #55586a; }
.tsec { border-right: 1px solid #8a8a90; box-shadow: 1px 0 0 #b8b8bc; padding-top: 12px; flex: none; }
.tsec hr { border: 0; border-top: 1px solid #86868a; border-bottom: 1px solid #c0c0c2; margin: 6px 0 4px; height: 2px; }
.lcd { background: radial-gradient(#232e12, #10160a); border: 6px solid #000; border-radius: 5px; box-shadow: 0 0 0 1px #888a8c, 0 1px 0 1px #d0d0d0, inset 0 0 4px #000; color: #a8d838; }
.modes-sec { width: 126px; padding: 0 6px; }
.modes-sec::before, .modes-sec::after, .raster-sec::before, .raster-sec::after { content: ""; display: block; height: 10px; border: 1px solid #86868c; border-top: 0; border-radius: 0 0 4px 4px; }
.modes-sec::after, .raster-sec::after { border: 1px solid #86868c; border-bottom: 0; border-radius: 4px 4px 0 0; margin-top: 8px; }
.modes { display: grid; grid-template-columns: 1fr 1fr; gap: 1px; margin: 9px 1px 0; height: 46px; }
.modes button { background: #1c2a10; border: 1px solid #3b5420; color: #7aa030; border-radius: 2px; display: flex; align-items: center; justify-content: center; }
.modes .on { background: #4f8fe0; color: #10203c; gap: 5px; border: 0; }
.zoom-sec { width: 105px; padding-left: 6px; padding-right: 8px; }
.tools-sec { width: 258px; padding-left: 8px; padding-right: 8px; }
.brow { display: flex; }
.brow button { display: flex; align-items: center; justify-content: center; background: linear-gradient(#e0e0e0, #b4b4b4 50%, #989898 52%, #aaa); border: 1px solid #5e5e62; border-radius: 2px; flex: none; }
.tall button { height: 31px; }
.short button { height: 20px; }
.joined button + button { border-left: 0; }
.spaced, .trans { gap: 4px; }
.brow .blue { background: linear-gradient(#6a92dc, #4a74c2 50%, #3b62ae); border-color: #26407c; }
.w13 { width: 13px; } .w18 { width: 18px; } .w31 { width: 31px; } .w32 { width: 32px; } .w35 { width: 36px; } .w38 { width: 38px; } .w39 { width: 39px; }
.short .w18 { font-size: 11px; color: #333; }
.smart { display: flex; width: 127px; padding: 8px 4px 0 6px; margin-top: -8px; background: linear-gradient(#5c80c8, #3f66b4); border: 1px solid #26407c; border-radius: 3px 3px 0 0; }
.smart button { flex: 1; }
.smart .blue { border-bottom: 0; }
.counter-sec { width: 416px; padding: 7px 11px 0; }
.counter { height: 70px; display: grid; grid-template-columns: 174px 132px 44px 1fr; grid-template-rows: 42px 1fr; font-size: 13px; line-height: 13px; }
.main { display: flex; align-items: center; justify-content: flex-end; gap: 6px; padding-right: 4px; border-right: 1px solid #5c7a20; }
.big { font-size: 26px; line-height: 26px; }
.main .tri, .grid80 .tri, .raster .tri { color: #c8c8c8; }
.range { display: grid; grid-template-columns: 38px 1fr; padding: 1px 4px 0 0; border-right: 3px double #5c7a20; text-align: right; font-size: 12px; }
.range dt { color: #eee; }
.midi { grid-column: 3 / 5; padding: 14px 0 0 50px; }
.cursor { grid-column: 1 / 3; border-top: 1px solid #5c7a20; border-right: 3px double #5c7a20; display: flex; align-items: center; gap: 5px; font-size: 11px; padding-left: 5px; }
.cursor b { color: #eee; width: 68px; font-size: 10px; }
.cursor .c2 { width: 55px; text-align: right; }
.wv { color: #eee; }
.redwave { background: #7a0c0c; color: #f04030; padding: 1px; }
.reddoc { width: 8px; height: 12px; background: #a01414; border-radius: 2px 0 0 0; }
.sbox, .mbox { width: 12px; height: 13px; font-style: normal; font-size: 10px; text-align: center; border: 1px solid #4a6020; line-height: 11px; color: #5c7a20; }
.mbox { background: #7a4410; color: #ffa030; border-color: #ffa030; }
.grid80 { grid-column: 3 / 5; border-top: 1px solid #5c7a20; display: flex; align-items: center; gap: 6px; padding-left: 5px; font-size: 11px; }
.raster-sec { width: 167px; padding: 0 8px 0 9px; }
.raster { height: 46px; margin: 9px 1px 0; padding: 0 2px; }
.raster div { height: 16px; display: flex; align-items: center; gap: 2px; font-size: 11px; }
.raster div + div { border-top: 1px solid #5c7a20; }
.raster b { width: 36px; color: #eee; font-size: 10px; text-align: center; }
.raster .badge { background: #a8d838; color: #142000; border-radius: 2px; height: 12px; font-weight: normal; }
.raster span { flex: 1; text-align: right; }
.transport-sec { width: 171px; padding-left: 10px; padding-right: 23px; }
.mini { display: flex; flex-direction: column; gap: 3px; padding-top: 3px; }
.mini button { width: 12px; height: 13px; }
.last-sec { flex: 1; padding: 7px 8px; border: 0; }
.vu { width: 32px; height: 71px; padding: 2px; }
.vu i { height: 54px; background: linear-gradient(90deg, transparent 45%, #0c1006 45% 55%, transparent 55%), linear-gradient(#4a0808 4px, #1f3010 4px); }

/* edit window */
.edit { display: flex; flex: none; background: #333; padding: 6px 0 4px; }
.side { width: 127px; flex: none; margin-right: 5px; }
.side h2 { height: 22px; margin-left: 1px; background: linear-gradient(#5a5a5a, #3c3c3c); border-radius: 5px 5px 0 0; color: #fff; font-weight: bold; font-size: 11px; line-height: 20px; text-align: center; position: relative; }
.side h2 button { position: absolute; right: 2px; top: 2px; width: 15px; height: 15px; border-radius: 50%; background: #8a8a8a; border: 1px solid #444; padding: 5px 0 0 2px; color: #333; }
.listwrap { display: flex; height: 407px; background: #d8d8d8; margin: 0 0 5px 1px; }
.tracklist { flex: 1; background: linear-gradient(90deg, transparent 27px, #aaa 27px 28px, transparent 28px 40px, #aaa 40px 41px, transparent 41px 54px, #aaa 54px 55px, transparent 55px); overflow: hidden; }
.tracklist li { display: flex; align-items: center; height: 11px; line-height: 11px; }
.tracklist .dot { width: 6px; height: 6px; border-radius: 50%; background: #444; margin: 0 17px 0 11px; }
.tracklist .off .dot { background: #bbb; }
.bar { width: 4px; height: 9px; border-radius: 1px; flex: none; }
.tracklist .bar { margin-right: 6px; }
.tracklist .ic { width: 10px; margin-left: 1px; color: #333; }
.tracklist span { width: 16px; text-align: right; margin-right: 5px; }
.tracklist em { font-style: normal; }
.tracklist .off em { font-style: italic; }
.side li.on { background: #8f98ae; }
.vscroll { width: 15px; background: linear-gradient(90deg, #999, #c8c8c8); display: flex; flex-direction: column; border-left: 1px solid #888; }
.thumb { height: 106px; background: linear-gradient(90deg, #555, #8a8a8a); margin-bottom: auto; border-bottom: 1px solid #222; }
.vscroll button { height: 16px; background: linear-gradient(#aaa, #777); color: #fff; font-size: 7px; border-top: 1px solid #444; }
.listwrap.groups { height: 117px; margin-bottom: 0; }
.grouplist { flex: 1; overflow: hidden; background: linear-gradient(90deg, transparent 17px, #aaa 17px 18px, transparent 18px 29px, #aaa 29px 30px, transparent 30px 45px, #aaa 45px 46px, transparent 46px); }
.grouplist li { display: grid; grid-template-columns: 22px 10px 16px 1fr; height: 13px; line-height: 13px; align-items: center; white-space: nowrap; overflow: hidden; }
.ring { width: 6px; height: 6px; border: 2px solid #555; border-radius: 50%; margin-left: 6px; }
.g0 { background: #3a00ff; } .g1 { background: #2b465e; } .g2 { background: #344f1c; }
.az { width: 15px; background: linear-gradient(90deg, #aaa, #bbb); }
.az b { display: block; background: #333; color: #ccc; height: 14px; line-height: 10px; width: 14px; }
.az sub { line-height: 4px; font-size: 9px; }

.arrange { flex: 1; min-width: 0; }
.rulers { display: grid; grid-template-columns: 313px 1fr; grid-auto-rows: 16px; row-gap: 1px; position: relative; padding-bottom: 2px; overflow: hidden; }
.rh { background: #444; color: #bbb; display: flex; align-items: center; padding-left: 30px; position: relative; text-shadow: 0 0 1px #888; }
.rh.first { background: #707884; color: #fff; padding-left: 2px; }
.rh.first .tri { color: #111; margin: 0 4px 0 3px; border-width: 5px 3px 0; width: 6px; }
.rh b { margin-left: auto; padding-right: 3px; font-size: 13px; }
.rtri { border: 4px solid transparent; border-left: 6px solid #999; border-right: 0; width: 0; }
.rh .rtri { margin: 0 14px 0 -20px; }
.rl { position: relative; overflow: hidden; }
.mk { position: absolute; top: 0; bottom: 0; border-left: 1px solid #282828; padding-left: 4px; line-height: 16px; color: #b8b8b8; }
.bars { background: #727a85; }
.bars .mk { color: #eee; }
.mins, .samp { background: #434343; }
.tempo { background: #9aa864; display: flex; align-items: center; gap: 3px; }
.redmark { border: 5px solid transparent; border-left: 6px solid #f01010; border-right: 0; margin-right: -1px; }
.meter { background: #6681a2; padding-left: 10px; line-height: 16px; }
.marker { background: #909090; }
.cols { padding: 0; background: none; gap: 2px; color: #e4e4e4; }
.cols div { height: 15px; background: #505050; line-height: 15px; text-align: center; }
.cols .c0 { width: 147px; background: #484848; display: flex; align-items: center; padding: 0 3px 0 2px; gap: 3px; }
.clock { margin-left: auto; }
.cols .c1 { width: 73px; }
.cols div.c2 { flex: 1; height: 18px; background: #a8a8ac; margin-left: -2px; }
.strip { background: linear-gradient(#a8aaac, #8e9292); }
.playhead { position: absolute; left: 1346px; top: 0; bottom: 0; width: 1px; background: #c0342c; }
.insertion { position: absolute; left: 1200px; top: 0; }

.tracks { height: 438px; overflow: hidden; position: relative; background: #333; }
.gridlayer { position: absolute; left: 313px; right: 0; top: 0; bottom: 0; }
.gl { position: absolute; top: 0; bottom: 0; width: 1px; background: #5d7ba6; z-index: 1; }
.track { display: grid; grid-template-columns: 13px 2px 110px 24px 74px 75px 15px 1fr; height: 43px; }
.track.short { height: 41px; }
.track > div { margin-bottom: 2px; }
.strip2 { background: var(--strip); border-radius: 6px 0 0 6px; padding: 3px 0 0 2px; grid-column: 1; }
.rnd { width: 10px; height: 10px; border-radius: 50%; background: rgba(255,255,255,.4); padding: 3px 0 0 1px; color: #333; }
.strip2 .rtri { margin: 15px 0 0 2px; border-left-color: rgba(255,255,255,.5); }
.tp { grid-column: 3; background: linear-gradient(var(--body), var(--light)); display: flex; flex-direction: column; }
.short .tp { display: grid; grid-template-columns: 60px 1fr; align-content: start; }
.inst .tp { grid-template-columns: 60px 19px 1fr; }
.tn { height: 16px; display: flex; background: #a09f9e; font-size: 12px; line-height: 16px; align-items: center; font-weight: bold; padding-left: 1px; white-space: nowrap; overflow: hidden; }
.tn strong { flex: 1; text-align: center; }
.ar { border-left: 1px solid #777; width: 12px; height: 16px; padding: 5px 0 0 2px; color: #555; flex: none; }
.short .tn { margin-top: 2px; }
.picked .tn, .picked .nm { background: #fff; color: #3a5ce8; }
.ism { display: flex; border: 1px solid #333; border-radius: 2px; background: #555; height: 15px; width: 45px; }
.ism button { flex: 1; color: #fff; font-weight: bold; background: linear-gradient(#777, #444); border-right: 1px solid #333; height: 13px; line-height: 13px; }
.ism .rec { background: #4c2c2c; }
.short .ism { margin: 3px 0 0 2px; }
.inst .ism.one { width: 12px; }
.inst .ism.sm { width: 26px; }
.ism .mute { background: #d08030; }
.tb { display: flex; gap: 3px; padding: 4px 0 0 3px; }
.pill { height: 15px; width: 30px; background: linear-gradient(#ccc, #a2a2a2); border: 1px solid #777; border-radius: 2px; }
.pill.auto { width: 24px; margin-left: -1px; color: #3c6e1c; }
.pb { grid-column: 2; width: 10px; height: 15px; margin: 2px 0 0 2px; background: #bbb; border-radius: 3px; font-weight: bold; }
.vm { background: var(--panel); padding: 5px 0 3px 3px; display: flex; }
.vm i { width: 7px; background: linear-gradient(#480808 4px, #40380f 4px 50%, #2c4010 50%); border: 1px solid #000; margin-right: -1px; }
.vm u { width: 5px; height: 20px; background: #5a3008; border: 1px solid #111; margin: 5px 0 0 2px; }
.cells { background: var(--panel); border-right: 1px solid var(--frame); display: grid; grid-template-columns: repeat(5, 10px); gap: 2px 4px; grid-auto-rows: 15px; padding: 4px 0 0 4px; }
.cells i { background: var(--slot); border-radius: 2px; display: flex; align-items: center; justify-content: center; color: #2c2c2c; font-style: normal; }
.cells b { width: 4px; height: 4px; border-radius: 50%; background: #2c2c2c; }
.cells .lit { background: #c8c8c8; color: #111; }
.pv { background: linear-gradient(#999 19px, #666 19px 20px, #999 20px); border-right: 1px solid #555; }
.keys { background: linear-gradient(90deg, transparent 8px, #eee 8px), repeating-linear-gradient(#eee 0 5px, #777 5px 8px); }
.track .lane { position: relative; background: linear-gradient(transparent 20px, #a4a4a4 20px 21px, transparent 21px) #b2b2b2; margin: 0; border-top: 1px solid #d4d4d4; border-bottom: 1px solid #6c6c6c; }
.inst .lane { background: #9fa5b1; }
.clip { position: absolute; top: 0; bottom: 1px; border: 1px solid #000; border-radius: 1px; z-index: 2; overflow: hidden; color: #fff; }
.wf { position: absolute; left: 0; top: 0; }
.cn, .db, .db2, .tt { position: absolute; background: rgba(40,40,35,.72); border-radius: 2px; height: 12px; line-height: 12px; padding: 0 1px; white-space: nowrap; }
.cn { left: 1px; top: 2px; }
.db { left: 3px; bottom: 2px; padding-top: 1px; width: 9px; }
.db2 { left: 14px; bottom: 2px; padding: 0 2px; }
.tt { right: 3px; top: 3px; padding: 0 3px; }
.foot { display: grid; grid-template-columns: 313px 1fr; height: 15px; }
.fl { background: #4a4a4a; display: flex; gap: 8px; padding: 3px; }
.hs { background: #acacac; }
.hs i { width: 174px; height: 15px; background: linear-gradient(#555, #888); border-right: 1px solid #333; }

/* floating system usage window */
.sys { position: absolute; z-index: 5; left: 2125px; right: 0; top: 41px; height: 210px; background: #3c3c3c; box-shadow: -1px 2px 5px rgba(0,0,0,.6); overflow: hidden; font-size: 11px; line-height: 13px; }
.systitle { height: 16px; background: #f6f6f6; display: flex; align-items: center; gap: 6px; padding-left: 5px; font-size: 13px; color: #999; white-space: nowrap; }
.systitle i { width: 12px; height: 12px; border-radius: 50%; background: #d4d4d4; border: 1px solid #bbb; flex: none; }
.systitle span { margin-left: 88px; }
.card { background: #c8c8c8; margin: 5px 0 0 5px; padding-bottom: 2px; border-radius: 3px 0 0 3px; }
.card h3 { display: flex; align-items: center; gap: 4px; height: 16px; background: #909090; color: #fff; font-weight: bold; padding-left: 3px; margin-bottom: 1px; border-radius: 3px 0 0 0; }
.card h3 .tri { color: #555; border-top-width: 8px; }
.card h3 span { color: #111; font-weight: normal; margin-left: auto; }
.card h3 .load { margin-left: 5px; width: 107px; flex: none; background: linear-gradient(90deg, #e0b820 3px, #4c3c08 3px); }
.srow { display: flex; align-items: center; height: 13px; gap: 9px; }
.srow span { width: 112px; text-align: right; flex: none; }
.load { height: 9px; flex: 1; border: 1px solid #333; background: linear-gradient(90deg, #7a6a10 1px, #4c3c08 1px); }
.srow .gr { background: linear-gradient(90deg, #7cc820 18px, #4c3c08 18px); }
.srow .ye { background: linear-gradient(90deg, #d8b428 97px, #4c3c08 97px); }

/* mix window */
.mixtitle { height: 18px; background: linear-gradient(#a4a4a4, #959595); border: 0; padding-bottom: 4px; }
.mixtitle .wtitle { color: #666; }
.mixtitle .lights { padding-left: 0; width: 182px; }
.mixtitle .lights i { background: #999; }
.mixtitle .lights .dot { background: radial-gradient(#444 2px, #999 3px); margin-left: -1px; }
.mixer { flex: 1; min-height: 0; display: flex; gap: 2px; margin-left: -3px; padding-top: 4px; overflow: hidden; }
.ch { width: 77px; flex: none; background: var(--frame); border-radius: 6px 6px 0 0; overflow: hidden; padding: 0 2px; }
.cap { height: 11px; margin: 0 -2px; background: var(--top); }
.sends { height: 83px; background: linear-gradient(rgba(0,0,0,.15), transparent) var(--panel); padding: 0 3px; overflow: hidden; margin-bottom: 5px; }
.sends i { height: 15px; background: var(--slot); margin-bottom: 3px; border-radius: 2px; padding: 2px 0 0 2px; color: rgba(0,0,0,.4); }
.sends i:first-child { height: 10px; padding: 0 0 0 2px; }
.pan1 { background: var(--panel); padding: 0 3px; height: 48px; margin-bottom: 5px; }
.pan1 h4 { color: #f0f0f0; text-align: center; height: 13px; line-height: 12px; margin: 0 -3px; }
.pan1.auto { height: 30px; border-radius: 8px 0 0 0; }
.dd { display: block; position: relative; }
.dd::after { content: ""; position: absolute; right: 2px; top: 3px; border: 4px solid transparent; border-top: 4px solid #5c5c5c; border-bottom: 0; pointer-events: none; }
.dd select, .out { appearance: none; width: 67px; height: 15px; background: linear-gradient(#c8c8c8, #a4a4a4); border: 1px solid #8a8a8a; border-radius: 2px; color: #111; text-align-last: center; display: block; padding-right: 8px; white-space: nowrap; line-height: 13px; }
.dd.ina select { background: rgba(255,255,255,.12); border-color: transparent; color: rgba(0,0,0,.75); font-style: italic; }
.ina::after { opacity: .5; }
.dd.gt select { color: #3c6e28; }
.dd + .out { margin-top: 3px; }
.out { display: flex; align-items: center; padding: 0; }
.out span { flex: 1; text-align: center; }
.out svg { width: 10px; border-left: 1px solid #777; color: #555; padding-left: 1px; }
.grp { background: var(--light); padding: 3px; height: 32px; border-radius: 3px 3px 0 0; }
.gbar { height: 5px; margin: 0 0 4px; border: 1px solid rgba(0,0,0,.4); background: #777; border-radius: 2px; }
.gbar.drumg { background: #285018; border-color: #aab098; }
.vca .pan1 .gbar { margin: 3px 0 10px; }
.grp .dd select { height: 17px; }
.low { background: var(--body); height: 417px; }
.knobs { height: 48px; display: flex; justify-content: center; gap: 3px; padding: 7px 2px 0 0; }
.disp { height: 15px; margin: 0 3px; background: #10180a; border: 1px solid #000; border-radius: 2px; color: #a8e030; font-weight: bold; display: flex; align-items: center; justify-content: space-around; }
.disp u { width: 1px; height: 8px; background: #5c7a20; }
.pl, .pr { border: 3px solid transparent; border-right: 4px solid #a8e030; border-left: 0; }
.pr { border-right: 0; border-left: 4px solid #a8e030; }
.none { visibility: hidden; }
.inf { color: #2c3a1c; }
.bt { display: flex; justify-content: space-between; padding: 0 9px 0 8px; height: 16px; margin-top: 8px; }
.bt button { width: 24px; height: 16px; background: linear-gradient(#888, #5c5c5c); border: 1px solid #222; border-radius: 2px; color: #fff; font-weight: bold; font-size: 11px; }
.bt span { width: 24px; }
.bt .rec { background: linear-gradient(#6a4c4a, #4a3030); padding-left: 7px; }
.rec i { width: 8px; height: 8px; border-radius: 50%; background: #ccc; }
.bt .mute { background: #c87c30; }
.bt button:disabled { opacity: .4; }
.fader { position: relative; height: 240px; margin-top: 3px; }
.bay text { font-size: 8px; fill: #ddd; text-anchor: end; }
.fader input { position: absolute; left: 14px; top: 0; width: 16px; height: 240px; appearance: none; writing-mode: vertical-lr; direction: rtl; background: none; }
.fader input::-webkit-slider-runnable-track { background: none; width: 16px; }
.fader input::-webkit-slider-thumb { appearance: none; width: 16px; height: 38px; border: 1px solid #222; border-radius: 2px; background: linear-gradient(#ddd 2px, #8c8c8c 4px, #707070 14px, #bbb 15px, #222 16px 18px, #ddd 19px, #eee 28px, #777 30px, #bbb 32px, #777); box-shadow: 0 2px 3px rgba(0,0,0,.5); }
.lev { margin-top: 10px; }
.dyn { height: 23px; display: flex; align-items: center; padding: 0 2px 0 3px; gap: 4px; }
.dyn button { width: 34px; height: 14px; border: 1px solid #b8b8b8; border-radius: 7px; background: var(--light); display: flex; align-items: center; justify-content: center; }
.dyn .ri { margin-left: auto; }
.nm { height: 15px; background: #9a9a9a; font-size: 12px; line-height: 15px; display: flex; font-weight: bold; white-space: nowrap; overflow: hidden; }
.nm strong { flex: 1; text-align: center; }
.dly { margin: 8px 1px 0; height: 60px; border: 2px solid #000; background: #12190c; color: #a8d838; padding: 0 3px; }
.dly div { display: flex; justify-content: space-between; height: 14px; line-height: 12px; border-bottom: 1px solid #4a6020; }

/* track colours */
.v-drum { --top: #2400cc; --frame: #443c7a; --panel: #3a3462; --slot: #4d4870; --body: #6f6c85; --light: #8f8ba8; }
.v-olive { --strip: #5c5015; --top: #4a4214; --frame: #4f4c3c; --panel: #434030; --slot: #545144; --body: #75726a; --light: #908e86; }
.v-green { --strip: #1f8a5c; --top: #176e4a; --frame: #45604f; --panel: #3f5449; --slot: #4e6056; --body: #707f77; --light: #8e9c94; }
.v-blue { --strip: #1e4b66; --top: #1c4256; --frame: #444e57; --panel: #3c464e; --slot: #4b545a; --body: #6f757b; --light: #8f949a; }
.v-moss { --strip: #2c5014; --top: #27401a; --frame: #494d3b; --panel: #404434; --slot: #4f5246; --body: #72756c; --light: #8f918a; }
.v-violet { --strip: #38006c; --top: #2a0050; --frame: #453c54; --panel: #3c3648; --slot: #4b4654; --body: #706b7a; --light: #8f8a98; }
.v-wine { --strip: #80000c; --top: #5a0d14; --frame: #5a403e; --panel: #4c3836; --slot: #5b4a48; --body: #7a6d6c; --light: #958988; }
.v-pine { --strip: #145432; --top: #16402c; --frame: #42524a; --panel: #3a4a40; --slot: #4a5850; --body: #6e7873; --light: #8b948f; }
.v-red { --strip: #c00004; --top: #920000; --frame: #5e413b; --panel: #4f3833; --slot: #5e4c47; --body: #7b6e6c; --light: #948987; }
.v-plum { --top: #5e0052; --frame: #503c54; --panel: #483850; --slot: #574a5c; --body: #766b7b; --light: #938a98; }
.v-mint { --top: #1a9c6e; --frame: #4b6456; --panel: #42564a; --slot: #52645b; --body: #727f79; --light: #8e9a94; }
```
